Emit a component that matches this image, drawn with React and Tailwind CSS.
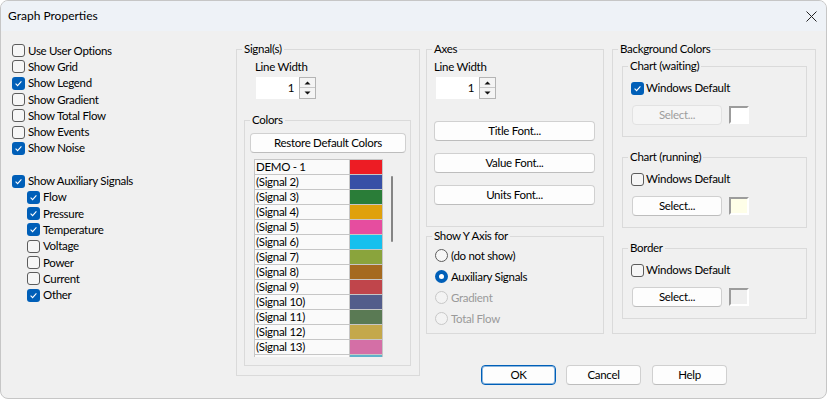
import React from 'react';

const signals = [
  ['DEMO - 1', '#ed1c24'],
  ['(Signal 2)', '#3850a6'],
  ['(Signal 3)', '#2a7d38'],
  ['(Signal 4)', '#e0a10c'],
  ['(Signal 5)', '#e64d9f'],
  ['(Signal 6)', '#16c0ee'],
  ['(Signal 7)', '#8aa43c'],
  ['(Signal 8)', '#a56a20'],
  ['(Signal 9)', '#c0454b'],
  ['(Signal 10)', '#535d8b'],
  ['(Signal 11)', '#5a7a54'],
  ['(Signal 12)', '#c4a84b'],
  ['(Signal 13)', '#d46fa6'],
  ['', '#5eb2ca'],
];

const Check = ({ checked }) =>
  checked ? (
    <span className="w-[13px] h-[13px] rounded-[3px] bg-[#005fb8] flex items-center justify-center shrink-0">
      <svg width="9" height="9" viewBox="0 0 9 9">
        <path d="M1.6 4.7 L3.6 6.6 L7.4 2.4" stroke="white" strokeWidth="1.1" fill="none" />
      </svg>
    </span>
  ) : (
    <span className="w-[13px] h-[13px] rounded-[3px] border border-[#5c5c5c] bg-[#f6f6f6] shrink-0" />
  );

const CheckRow = ({ label, checked, sub }) => (
  <div className={`h-[16.3px] flex items-center ${sub ? 'pl-[15px]' : ''}`}>
    <Check checked={checked} />
    <span className="ml-[3px] leading-[14px]">{label}</span>
  </div>
);

const Radio = ({ label, checked, disabled }) => (
  <div className="h-[21px] flex items-center pl-[8px]">
    {checked ? (
      <span className="w-[13px] h-[13px] rounded-full bg-[#005fb8] flex items-center justify-center shrink-0">
        <span className="w-[5px] h-[5px] rounded-full bg-white" />
      </span>
    ) : (
      <span
        className={`w-[13px] h-[13px] rounded-full border shrink-0 ${
          disabled ? 'border-[#c8c8c8] bg-[#f3f3f3]' : 'border-[#5c5c5c] bg-[#f6f6f6]'
        }`}
      />
    )}
    <span className={`ml-[3px] leading-[14px] ${disabled ? 'text-[#9a9a9a]' : ''}`}>{label}</span>
  </div>
);

const Button = ({ children, className = '', disabled }) => (
  <div
    className={`h-[20px] rounded-[4px] border flex items-center justify-center leading-[14px] ${
      disabled
        ? 'bg-[#f5f5f5] border-[#e2e2e2] text-[#9d9d9d]'
        : 'bg-[#fdfdfd] border-[#d0d0d0] border-b-[#bdbdbd]'
    } ${className}`}
  >
    {children}
  </div>
);

const Spinner = ({ className = '' }) => (
  <div className={`flex h-[22px] ${className}`}>
    <div className="w-[43px] bg-white flex items-center justify-end pr-[5px] leading-[14px]">1</div>
    <div className="w-[17px] flex flex-col border border-[#b4b4b4] bg-[#f4f4f4]">
      <div className="h-[10px] flex items-center justify-center border-b border-[#c8c8c8]">
        <svg width="7" height="4" viewBox="0 0 7 4">
          <path d="M0.5 3.5 L3.5 0.5 L6.5 3.5 Z" fill="#111" />
        </svg>
      </div>
      <div className="flex-1 flex items-center justify-center">
        <svg width="7" height="4" viewBox="0 0 7 4">
          <path d="M0.5 0.5 L3.5 3.5 L6.5 0.5 Z" fill="#111" />
        </svg>
      </div>
    </div>
  </div>
);

const Group = ({ title, className = '', children }) => (
  <fieldset className={`border border-[#dadada] ${className}`}>
    <legend className="ml-[5px] px-[2px] leading-[14px]">{title}</legend>
    {children}
  </fieldset>
);

const Swatch = ({ color }) => (
  <div
    className={`ml-[7px] w-[20px] h-[18px] border-2 border-t-[#9c9c9c] border-l-[#9c9c9c] border-r-white border-b-white ${color}`}
  />
);

const ColorGroup = ({ title, checked, className = '' }) => (
  <Group title={title} className={`ml-[9px] w-[185px] h-[78px] ${className}`}>
    <div className="mt-[7px] ml-[8px] h-[16px] flex items-center">
      <Check checked={checked} />
      <span className="ml-[2px] leading-[14px]">Windows Default</span>
    </div>
    <div className="mt-[9px] ml-[9px] flex items-center">
      <Button className="w-[90px]" disabled={checked}>
        Select...
      </Button>
      <Swatch color={checked ? 'bg-white' : title === 'Border' ? 'bg-[#efefef]' : 'bg-[#fefee8]'} />
    </div>
  </Group>
);

export default function App() {
  return (
    <div
      className="w-[827px] h-[399px] bg-[#f0f0f0] border border-[#c6c6c6] rounded-[8px] overflow-hidden flex flex-col text-[11.5px] tracking-[-0.3px] text-black"
      style={{ fontFamily: 'Lato, "Noto Sans", sans-serif' }}
    >
      <div className="h-[30px] shrink-0 bg-[#eef2f7] flex items-center justify-between pl-[7px] pr-[9px]">
        <span className="leading-[14px] text-[12px] tracking-normal">Graph Properties</span>
        <svg width="11" height="11" viewBox="0 0 11 11">
          <path d="M0.5 0.5 L10.5 10.5 M10.5 0.5 L0.5 10.5" stroke="#222" strokeWidth="1" />
        </svg>
      </div>

      <div className="flex items-start pt-[11px] pl-[11px]">
        <div className="w-[224px] mt-[0.5px] flex flex-col">
          <CheckRow label="Use User Options" />
          <CheckRow label="Show Grid" />
          <CheckRow label="Show Legend" checked />
          <CheckRow label="Show Gradient" />
          <CheckRow label="Show Total Flow" />
          <CheckRow label="Show Events" />
          <CheckRow label="Show Noise" checked />
          <div className="h-[16.3px]" />
          <CheckRow label="Show Auxiliary Signals" checked />
          <CheckRow label="Flow" checked sub />
          <CheckRow label="Pressure" checked sub />
          <CheckRow label="Temperature" checked sub />
          <CheckRow label="Voltage" sub />
          <CheckRow label="Power" sub />
          <CheckRow label="Current" sub />
          <CheckRow label="Other" checked sub />
        </div>

        <Group title="Signal(s)" className="w-[184px] h-[334px]">
          <div className="mt-[4px] ml-[18px] leading-[14px]">Line Width</div>
          <Spinner className="mt-[3px] ml-[19px]" />
          <Group title="Colors" className="mt-[14px] ml-[7px] w-[167px] h-[253px]">
            <Button className="mt-[6px] ml-[5px] w-[156px]">Restore Default Colors</Button>
            <div className="mt-[6px] ml-[9px] flex h-[198px] overflow-hidden">
              <div className="w-[129px] flex flex-col">
                {signals.map(([name, color], i) => (
                  <div key={i} className="h-[15px] shrink-0 flex border-t border-[#c6c6c6]">
                    <div className="w-[95px] h-[14px] overflow-hidden border-l border-[#c6c6c6] bg-[#fafafa] pl-[1px] leading-[14px] whitespace-nowrap">
                      {name}
                    </div>
                    <div className="w-[34px] border-l border-r border-[#c6c6c6]" style={{ backgroundColor: color }} />
                  </div>
                ))}
              </div>
              <div className="ml-[8px] mt-[17px] w-[2px] h-[66px] rounded-full bg-[#858585]" />
            </div>
          </Group>
        </Group>

        <div className="ml-[6px] flex flex-col">
          <div className="flex items-start">
            <div className="w-[178px] flex flex-col">
              <Group title="Axes" className="h-[185px]">
                <div className="mt-[4px] ml-[7px] leading-[14px]">Line Width</div>
                <Spinner className="mt-[3px] ml-[9px]" />
                <Button className="mt-[22px] ml-[7px] w-[161px]">Title Font...</Button>
                <Button className="mt-[12px] ml-[7px] w-[161px]">Value Font...</Button>
                <Button className="mt-[12px] ml-[7px] w-[161px]">Units Font...</Button>
              </Group>
              <Group title="Show Y Axis for" className="mt-[2px] h-[105px]">
                <div className="mt-[2px]">
                  <Radio label="(do not show)" />
                  <Radio label="Auxiliary Signals" checked />
                  <Radio label="Gradient" disabled />
                  <Radio label="Total Flow" disabled />
                </div>
              </Group>
            </div>

            <Group title="Background Colors" className="ml-[8px] w-[204px] h-[292px]">
              <ColorGroup title="Chart (waiting)" checked className="mt-[3px]" />
              <ColorGroup title="Chart (running)" className="mt-[13px]" />
              <ColorGroup title="Border" className="mt-[13px]" />
            </Group>
          </div>

          <div className="mt-[31px] ml-[55px] flex">
            <Button className="w-[75px] !border-[#005fb8] shadow-[inset_0_0_0_1px_rgba(0,95,184,0.45)]">OK</Button>
            <Button className="ml-[10px] w-[75px]">Cancel</Button>
            <Button className="ml-[11px] w-[75px]">Help</Button>
          </div>
        </div>
      </div>
    </div>
  );
}
